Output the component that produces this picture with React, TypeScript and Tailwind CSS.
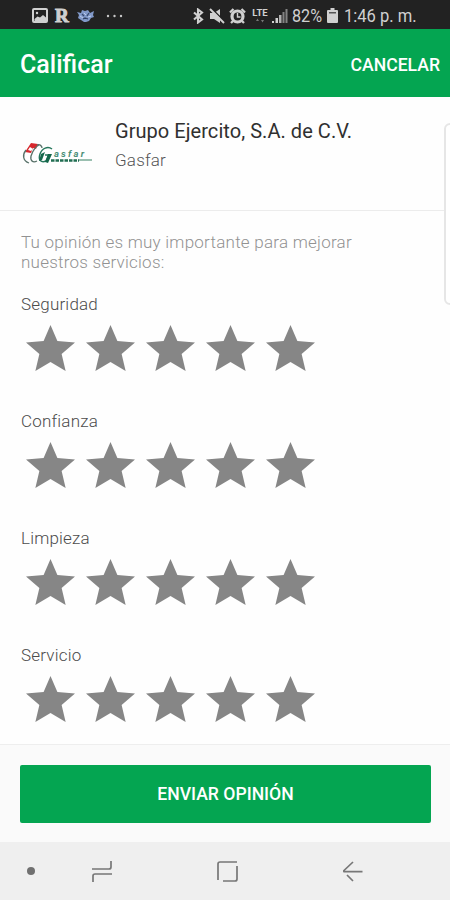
import { useState } from 'react'

const categories = ['Seguridad', 'Confianza', 'Limpieza', 'Servicio']

function StatusBar() {
  return (
    <div className="flex h-[29px] shrink-0 items-center bg-[#222222] pl-8 pt-[2px] text-[#d0d0d0]">
      <svg className="mr-[7px] shrink-0" width="16" height="15" viewBox="0 0 16 15">
        <rect x="1" y="1" width="14" height="13" rx="1" fill="none" stroke="#d0d0d0" strokeWidth="2" />
        <path d="M2.500 11l3-2.500 2.500 1 3-2.500 3 2.500V13h-11.500z" fill="#d0d0d0" />
        <circle cx="5" cy="5" r="1.200" fill="#d0d0d0" />
      </svg>
      <span className="mr-[7px] w-[15px] font-['Liberation_Serif',serif] text-[19px] leading-none font-bold [-webkit-text-stroke:1px_#d0d0d0]">R</span>
      <svg className="mr-3 shrink-0" width="17" height="14" viewBox="0 0 17 14">
        <path d="M0 3l4 1 1-3 3 1 3-1 2 3 4-2-1 4 1 2-3 1-2 3-3 1H7l-3-2-3-2 1-3z" fill="#8199c9" />
        <path d="M5 5l2 2M12 4l-2 3M6 10l2-1 3 1" stroke="#36486d" strokeWidth="1.300" />
        <path d="M7 4l2 2M3 7l3 2M11 8l3-1" stroke="#bccbea" />
      </svg>
      <svg className="mr-[70px] shrink-0" width="17" height="4" viewBox="0 0 17 4" fill="#c8c8c8">
        <circle cx="2" cy="2" r="1.200" />
        <circle cx="8.500" cy="2" r="1.200" />
        <circle cx="15" cy="2" r="1.200" />
      </svg>
      <svg className="mr-[5px] shrink-0" width="11" height="16" viewBox="0 0 11 16" fill="none" stroke="#d0d0d0" strokeWidth="2.100">
        <path d="M1 4.500l8 7-4 3V1.500l4 3-8 7" />
      </svg>
      <svg className="mr-1 shrink-0" width="16" height="16" viewBox="0 0 16 16" fill="#d0d0d0">
        <path d="M1 5h4l6-4v14l-6-4H1z" />
        <path d="M2 0l14 14" stroke="#222222" strokeWidth="1.600" />
        <path d="M1 1l14 14" stroke="#d0d0d0" strokeWidth="2" />
      </svg>
      <svg className="mr-[6px] shrink-0" width="17" height="16" viewBox="0 0 17 16">
        <circle cx="8.500" cy="8.500" r="5.500" fill="none" stroke="#d0d0d0" strokeWidth="3.200" />
        <path d="M1 4.500L4.500 1M12.500 1L16 4.500M4 13l-2 2M13 13l2 2" stroke="#d0d0d0" strokeWidth="2.300" />
        <path d="M8.500 5v4h3" fill="none" stroke="#d0d0d0" strokeWidth="1.400" />
      </svg>
      <div className="mr-[4px] flex h-4 w-4 flex-col items-center">
        <span className="text-[9.500px] leading-[10px] font-bold">LTE</span>
        <svg width="8" height="5" viewBox="0 0 8 5" fill="#777777">
          <path d="M0 3l1.500-2.500L3 3zM5 2l1.500 2.500L8 2z" />
        </svg>
      </div>
      <svg className="mr-1 shrink-0" width="16" height="16" viewBox="0 0 16 16">
        <path d="M0 13h2v2H0zM3.500 10h2.500v5h-2.500z" fill="#d0d0d0" />
        <path d="M7 7h2.500v8H7z" fill="#b0b0b0" />
        <path d="M10.500 4h2v11h-2zM13.500 1h2v14h-2z" fill="#828282" />
      </svg>
      <span className="w-[35px] origin-left scale-x-[0.9] text-[18px] leading-none whitespace-nowrap">82%</span>
      <svg className="mr-[6px] shrink-0" width="11" height="15" viewBox="0 0 11 15">
        <path d="M3.500 0h4v2H10a1 1 0 011 1v11a1 1 0 01-1 1H1a1 1 0 01-1-1V3a1 1 0 011-1h2.500z" fill="#d0d0d0" />
        <path d="M2 4h7v1.500H2z" fill="#555555" />
      </svg>
      <span className="w-20 origin-left scale-x-[0.92] text-[18px] leading-none whitespace-nowrap">1:46 p. m.</span>
    </div>
  )
}

function GasfarLogo() {
  return (
    <svg width="72" height="24" viewBox="0 0 72 24">
      <path d="M9 1l7 1-2 5-3-1-2 5-6-1z" fill="#d7272d" />
      <path d="M8 5l3 2-2 2-3-1z" fill="#ffffff" />
      <path d="M4 8c-4 5-3 11 3 13M17 3c-4 2-7 8-8 11-1 5 2 7 6 5M15 3c3-1 5 1 5 3" fill="none" stroke="#59726a" strokeWidth="1.300" />
      <path d="M30 7c-4-3-10-1-12 5-2 6 1 9 6 7l3-6h-4" fill="none" stroke="#25765b" strokeWidth="1.500" />
      <path d="M19 12l4-2-3 8-3 1zM26 12h4l-4 9-3-1z" fill="#14674a" />
      <text x="32" y="14.500" textLength="30" lengthAdjust="spacing" fill="#4a8f78" fontSize="9.500" fontStyle="italic" fontWeight="700">asfar</text>
      <path d="M29 18.500h28" stroke="#216e52" strokeWidth="2.400" strokeDasharray="3.500 1" />
      <path d="M57 18h13" stroke="#8fb8a8" strokeWidth="1.800" />
    </svg>
  )
}

function Rating({ label }: { label: string }) {
  const [value, setValue] = useState(0)

  return (
    <div className="h-[117px]">
      <p className="text-[17px] leading-5 font-light tracking-[0.2px] text-[#4c4c4c]">{label}</p>
      <div className="mt-[11px] ml-[5px] flex gap-[11px]">
        {[1, 2, 3, 4, 5].map((n) => (
          <button key={n} aria-label={`${label} ${n}`} onClick={() => setValue(n)}>
            <svg
              className={n <= value ? 'text-[#04a551]' : 'text-[#868686]'}
              width="49"
              height="46"
              viewBox="2 2 20 19"
              preserveAspectRatio="none"
              fill="currentColor"
            >
              <path d="M12 17.270L18.180 21l-1.640-7.030L22 9.240l-7.190-.610L12 2 9.190 8.630 2 9.240l5.460 4.730L5.820 21z" />
            </svg>
          </button>
        ))}
      </div>
    </div>
  )
}

export default function App() {
  return (
    <div className="relative flex h-[900px] w-[450px] flex-col overflow-hidden bg-[#fefefe] font-['Roboto',sans-serif]">
      <StatusBar />
      <header className="flex h-[68px] shrink-0 items-center justify-between bg-[#04a551] pr-[10px] pl-[20px] pt-[4px] text-white">
        <h1 className="text-[25px] leading-8 font-medium">Calificar</h1>
        <button className="text-[17.600px] font-medium">CANCELAR</button>
      </header>

      <section className="flex h-[114px] shrink-0 border-b border-[#ececec] pl-[22px]">
        <div className="mt-[45px] w-[93px]">
          <GasfarLogo />
        </div>
        <div className="pt-[22px]">
          <h2 className="text-[20px] leading-6 tracking-[0.050px] whitespace-nowrap text-[#303030]">Grupo Ejercito, S.A. de C.V.</h2>
          <p className="mt-[6px] text-[17px] leading-[22px] font-light tracking-[0.200px] text-[#555555]">Gasfar</p>
        </div>
      </section>

      <main className="flex-1 overflow-hidden pt-[21px] pl-[21px]">
        <p className="mb-[22px] text-[17px] leading-5 font-light tracking-[0.240px] whitespace-nowrap text-[#929292]">
          Tu opinión es muy importante para mejorar
          <br />
          nuestros servicios:
        </p>
        {categories.map((label) => (
          <Rating key={label} label={label} />
        ))}
      </main>

      <div className="h-[98px] shrink-0 border-t border-[#eeeeee] bg-[#fafafa] pt-5 pr-[19px] pl-5">
        <button className="h-[58px] w-full rounded-[2px] bg-[#04a551] text-[17.600px] font-medium text-white">
          ENVIAR OPINIÓN
        </button>
      </div>

      <nav className="flex h-[58px] shrink-0 items-center bg-[#efefef] pl-[27px]">
        <span className="mr-[57px] size-2 rounded-full bg-[#707070]" />
        <svg className="mr-[105px]" width="20" height="23" viewBox="0 0 20 23" fill="none" stroke="#777777" strokeWidth="1.700">
          <path d="M0 9h17q2 0 2-2V1M20 14H3q-2 0-2 2v6" />
        </svg>
        <svg className="mr-[105px]" width="21" height="21" viewBox="0 0 21 21" fill="none" stroke="#777777" strokeWidth="1.700">
          <path d="M1 19V3q0-2 2-2h17M20 5v13q0 2-2 2H6" />
        </svg>
        <svg width="20" height="21" viewBox="0 0 20 21" fill="none" stroke="#777777" strokeWidth="1.700">
          <path d="M10 1L1 9.500q-.6.800 0 1.200H19.500M4 14l6 6" />
        </svg>
      </nav>

      {/* edge panel handle */}
      <div className="absolute top-[123px] -right-2 h-[182px] w-[14px] rounded-[6px] border-2 border-[#e6e6e6] bg-white" />
    </div>
  )
}
